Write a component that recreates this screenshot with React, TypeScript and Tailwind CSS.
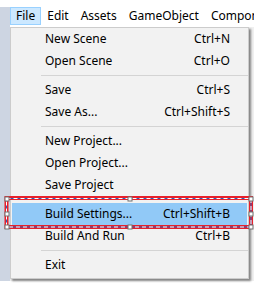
import React from "react";

type Item = { label: string; shortcut?: string; selected?: boolean } | "sep";

const items: Item[] = [
  { label: "New Scene", shortcut: "Ctrl+N" },
  { label: "Open Scene", shortcut: "Ctrl+O" },
  "sep",
  { label: "Save", shortcut: "Ctrl+S" },
  { label: "Save As...", shortcut: "Ctrl+Shift+S" },
  "sep",
  { label: "New Project..." },
  { label: "Open Project..." },
  { label: "Save Project" },
  "sep",
  { label: "Build Settings...", shortcut: "Ctrl+Shift+B", selected: true },
  { label: "Build And Run", shortcut: "Ctrl+B" },
  "sep",
  { label: "Exit" },
];

const menus = ["File", "Edit", "Assets", "GameObject", "Component"];

export default function App() {
  return (
    <div
      className="relative w-[254px] h-[284px] overflow-hidden bg-white text-[12px] text-black"
      style={{ fontFamily: '"Noto Sans", "Open Sans", sans-serif' }}
    >
      <div className="h-[7px] bg-white" />
      <div className="flex">
        <div className="w-[10px] shrink-0 h-[274px] bg-[#cdd5e2]" />
        <div className="flex-1 min-w-0 overflow-hidden flex flex-col">
          <div className="h-[20px] flex items-start bg-white whitespace-nowrap">
            {menus.map((m, i) => (
              <div
                key={m}
                className={
                  "h-[18px] shrink-0 px-[5px] flex items-center border leading-none " +
                  (i === 0 ? "bg-[#cce8ff] border-[#99d1ff]" : "border-transparent")
                }
              >
                {m}
              </div>
            ))}
          </div>
          <div className="flex-1 bg-[#f0f0f0]" />
        </div>
      </div>

      {/* dropdown */}
      <div className="absolute left-[10px] top-[27px] w-[239px] bg-[#f2f2f2] border border-[#cccccc] shadow-[2px_2px_2px_rgba(0,0,0,0.45)] pb-[2px]">
        {items.map((it, i) =>
          it === "sep" ? (
            <div key={i} className="h-[7px] flex items-center pl-[30px]">
              <div className="h-px w-full bg-[#d4d4d4]" />
            </div>
          ) : (
            <div
              key={i}
              className={
                "h-[22px] mx-px pl-[33px] pr-[17px] flex items-center justify-between whitespace-nowrap " +
                (it.selected ? "bg-[#91c9f7]" : "")
              }
            >
              <span>{it.label}</span>
              {it.shortcut && <span>{it.shortcut}</span>}
            </div>
          )
        )}
      </div>

      {/* selection annotation */}
      <svg className="absolute left-0 top-0" width="254" height="284" viewBox="0 0 254 284">
        <rect x="6.5" y="198" width="244.5" height="29" fill="none" stroke="#e8202a" strokeWidth="4" />
        <rect x="6.5" y="198.5" width="244.5" height="28.5" fill="none" stroke="#2f5fb8" strokeWidth="1" />
        <rect x="6.5" y="198.5" width="244.5" height="28.5" fill="none" stroke="#ffffff" strokeWidth="1" strokeDasharray="4 3" />
        {[
          [7, 199],
          [130, 199],
          [251, 199],
          [7, 214],
          [251, 214],
          [7, 227],
          [130, 227],
          [251, 227],
        ].map(([x, y], i) => (
          <rect key={i} x={x - 2} y={y - 2} width="4" height="4" fill="#ffffff" stroke="#707070" strokeWidth="1" />
        ))}
      </svg>
    </div>
  );
}
